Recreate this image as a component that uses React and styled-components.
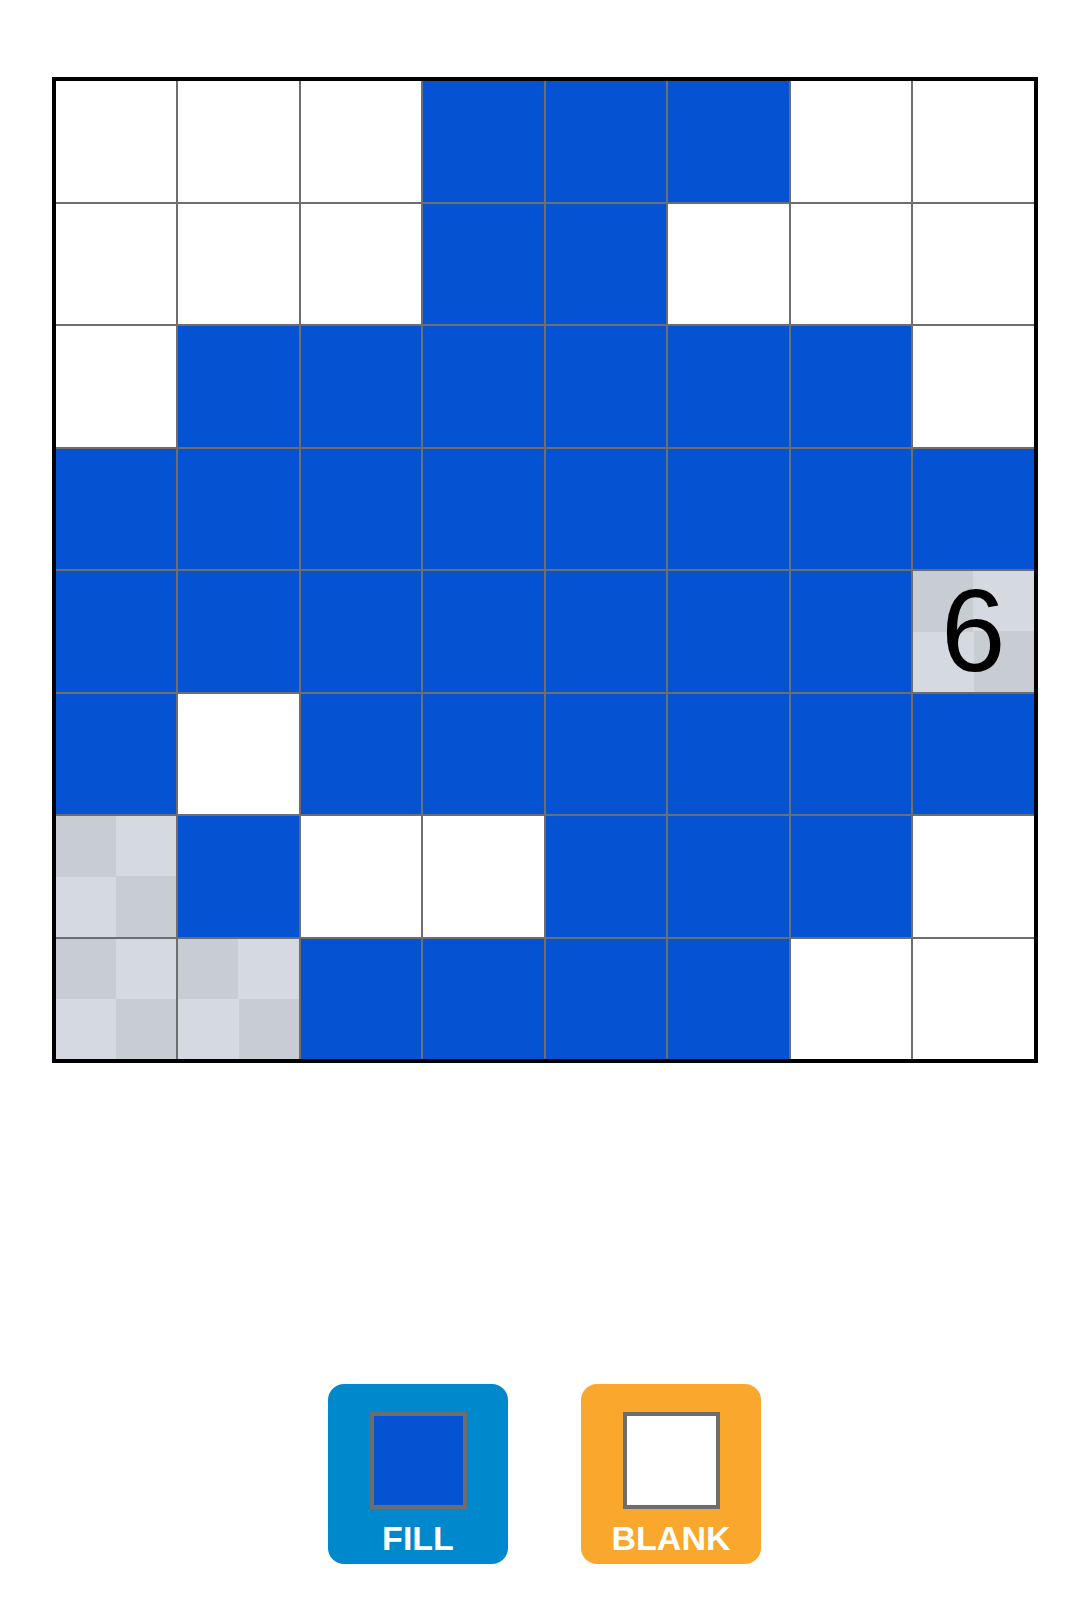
import React from 'react';
import styled, { createGlobalStyle } from 'styled-components';

const GlobalStyle = createGlobalStyle`
  html, body {
    margin: 0;
    padding: 0;
    background: #ffffff;
    font-family: "Liberation Sans", Arial, sans-serif;
  }
`;

const Page = styled.div`
  width: 1089px;
  min-height: 1600px;
  padding-top: 77px;
  box-sizing: border-box;
  display: flex;
  flex-direction: column;
  align-items: center;
`;

const Board = styled.div`
  width: 986px;
  height: 986px;
  box-sizing: border-box;
  border: 4px solid #000000;
  background: #6e6e6e;
  display: grid;
  grid-template-columns: repeat(8, 1fr);
  grid-template-rows: repeat(8, 1fr);
  gap: 2px;
`;

// gray cells get a 2x2 checker, like an unsolved tile
const Cell = styled.div`
  display: flex;
  align-items: center;
  justify-content: center;
  font-size: 116px;
  line-height: 1;
  color: #000000;
  background: ${p =>
    p.kind === 'fill'
      ? '#0553d3'
      : p.kind === 'blank'
      ? '#ffffff'
      : 'conic-gradient(#d5d9e0 0 25%, #c8ccd3 0 50%, #d5d9e0 0 75%, #c8ccd3 0)'};
`;

const Controls = styled.div`
  margin-top: 321px;
  display: flex;
  gap: 73px;
`;

const ToolButton = styled.div`
  width: 180px;
  height: 180px;
  border-radius: 16px;
  background: ${p => p.color};
  display: flex;
  flex-direction: column;
  align-items: center;
  padding-top: 28px;
  box-sizing: border-box;
  cursor: pointer;
`;

const Swatch = styled.div`
  width: 97px;
  height: 97px;
  box-sizing: border-box;
  border: 4px solid #6d6d6d;
  background: ${p => p.color};
`;

const Label = styled.div`
  margin-top: 12px;
  font-size: 34px;
  line-height: 1;
  font-weight: bold;
  color: #ffffff;
`;

const rows = [
  '...###..',
  '...##...',
  '.######.',
  '########',
  '#######6',
  '#.######',
  'g#..###.',
  'gg####..',
];

const kindOf = ch => {
  if (ch === '#') return 'fill';
  if (ch === '.') return 'blank';
  return 'unknown';
};

export default function App() {
  return (
    <Page>
      <GlobalStyle />
      <Board>
        {rows.map((row, r) =>
          row.split('').map((ch, c) => (
            <Cell key={r + '-' + c} kind={kindOf(ch)}>
              {/[0-9]/.test(ch) ? ch : null}
            </Cell>
          ))
        )}
      </Board>
      <Controls>
        <ToolButton color="#0088cc">
          <Swatch color="#0553d3" />
          <Label>FILL</Label>
        </ToolButton>
        <ToolButton color="#f9a82d">
          <Swatch color="#ffffff" />
          <Label>BLANK</Label>
        </ToolButton>
      </Controls>
    </Page>
  );
}
